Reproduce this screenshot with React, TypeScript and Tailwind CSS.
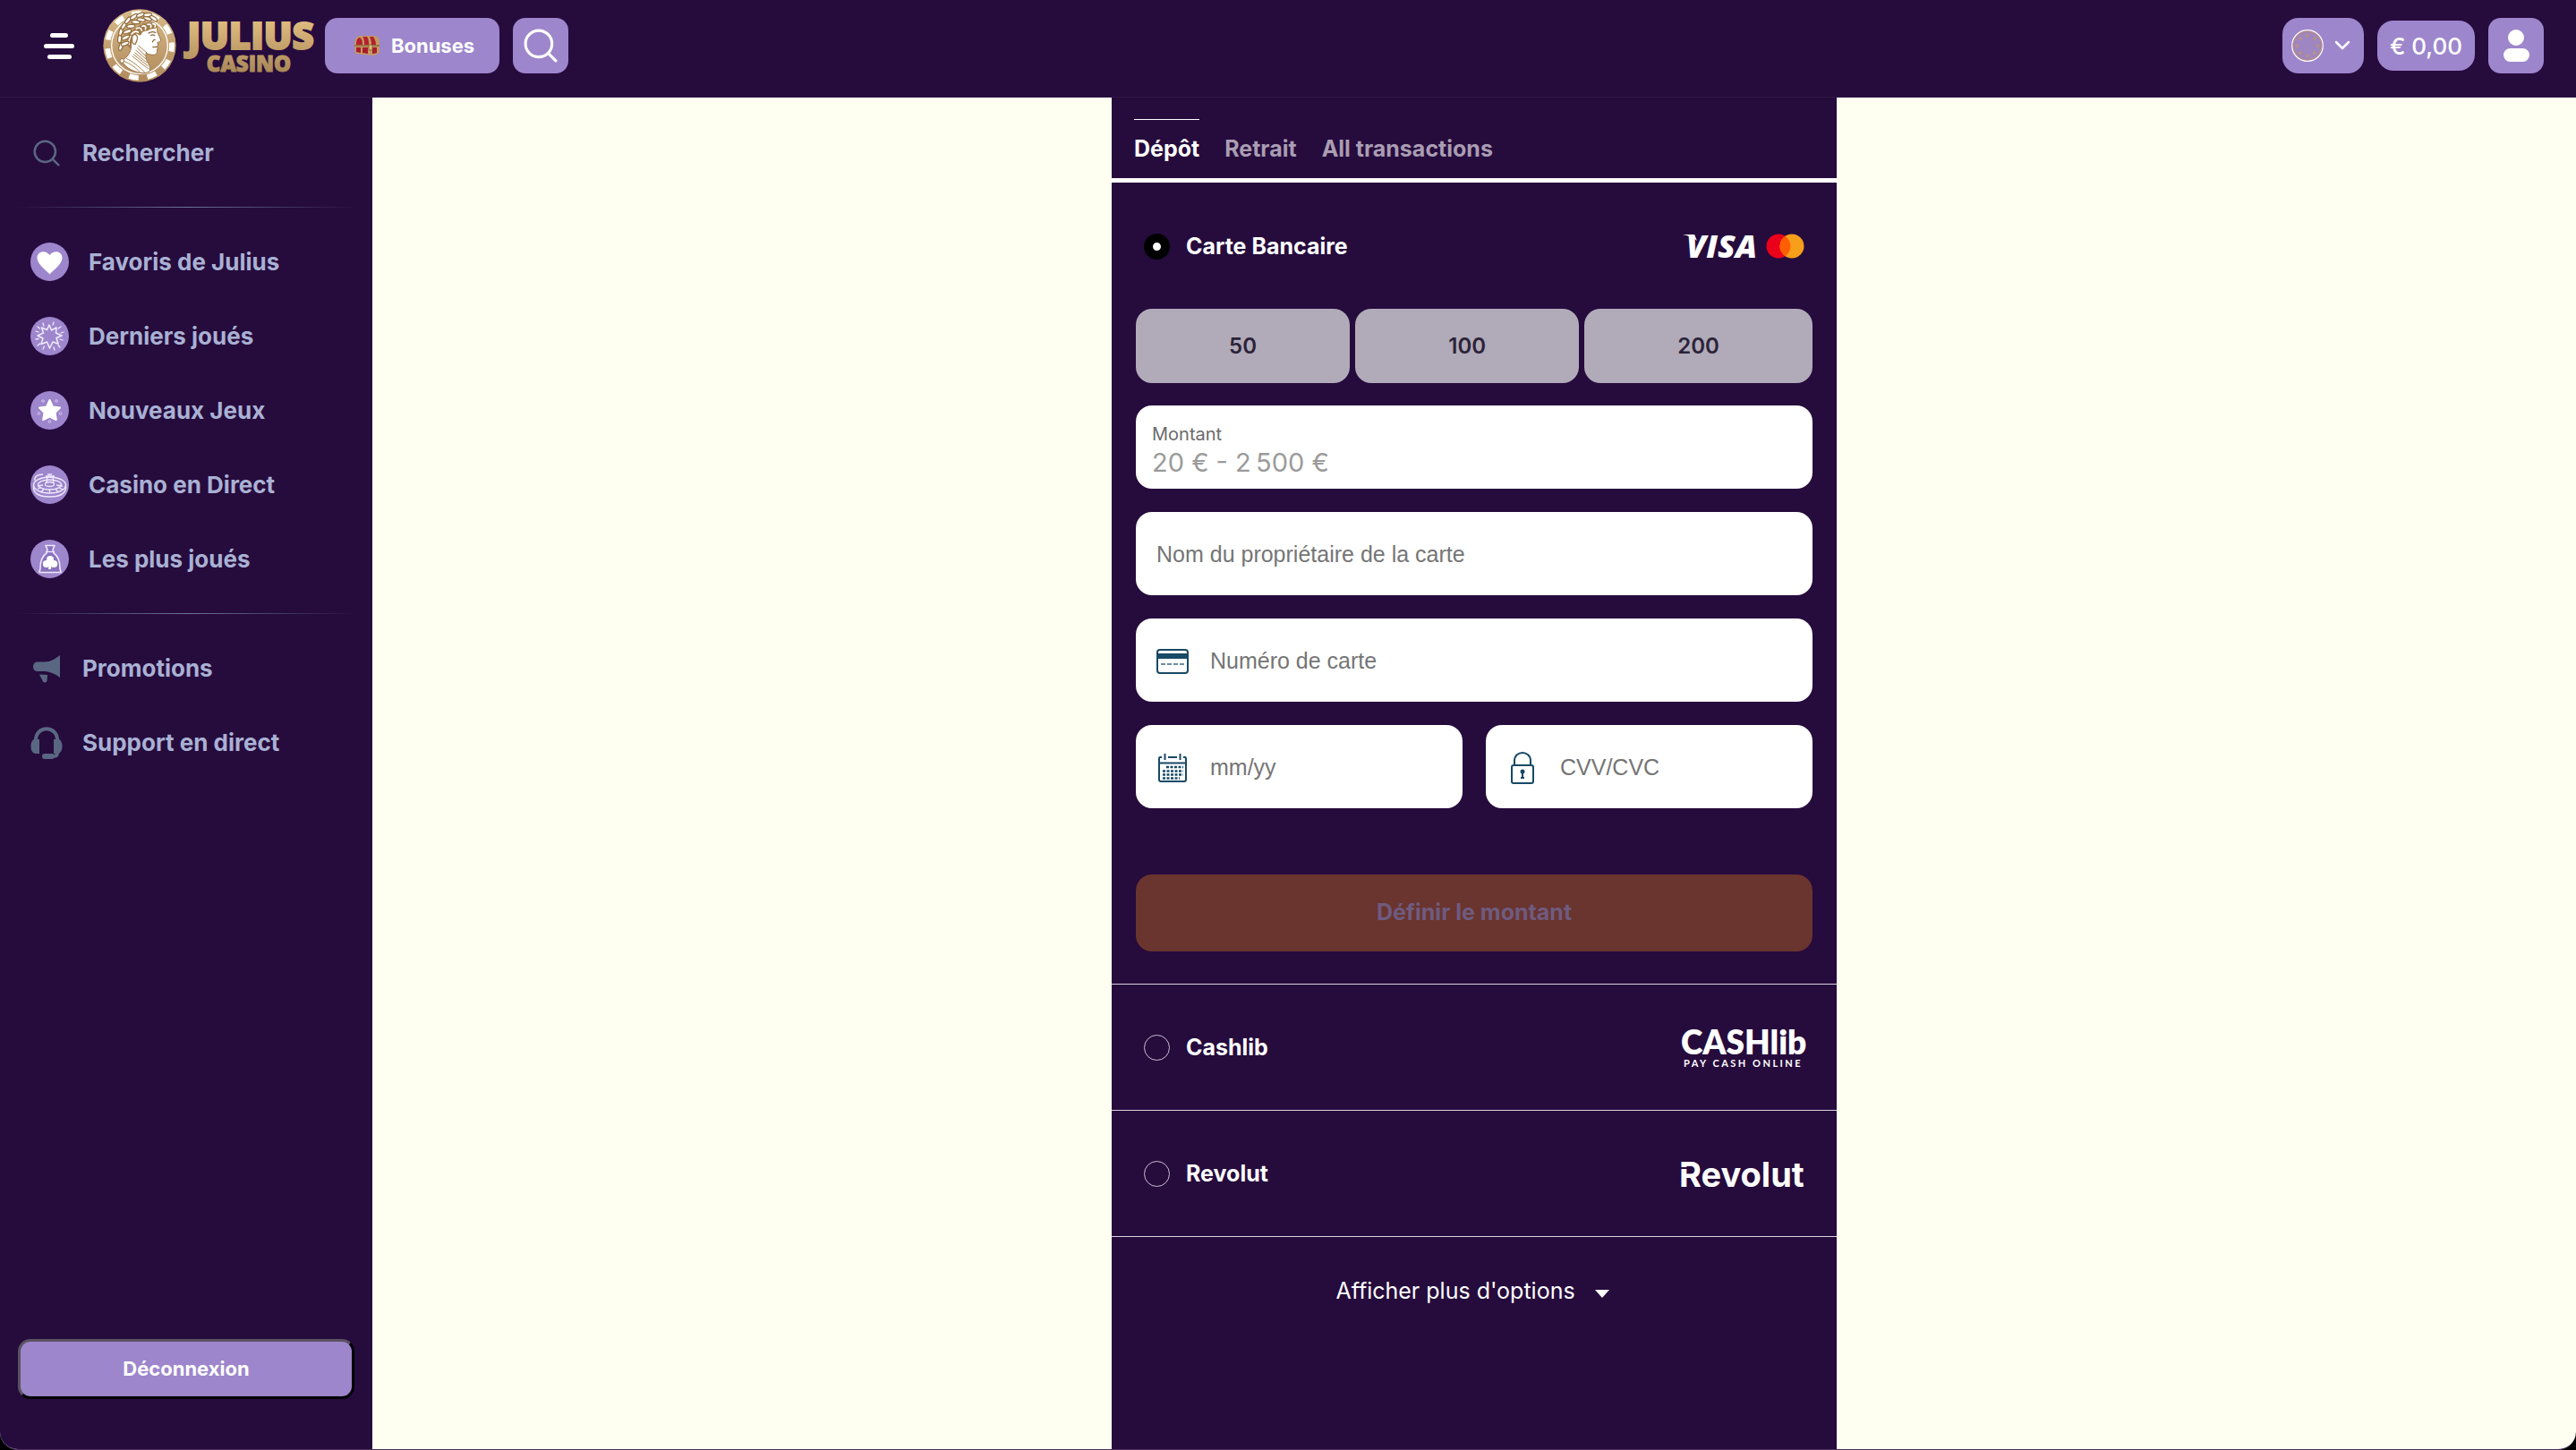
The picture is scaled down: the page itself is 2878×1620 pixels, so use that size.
import { ReactNode, useState } from 'react';

interface IconProps {
  className?: string;
}

interface PaymentMethod {
  id: string;
  label: string;
  logo: ReactNode;
}

function ChipLogo() {
  const leaves = [
    [60, 126, -75], [74, 116, -20], [56, 100, -85], [76, 96, -25], [60, 76, -75], [82, 76, -20],
    [70, 56, -60], [94, 58, -5], [84, 38, -50], [110, 44, 5], [104, 26, -35], [128, 36, 10],
    [126, 20, -20], [150, 32, 20], [150, 20, -5], [170, 32, 35],
  ];
  return (
    <svg viewBox="0 0 246 246" className="size-[82px]" aria-hidden="true">
      <defs>
        <linearGradient id="chipGold" x1="0" y1="0" x2="0" y2="1">
          <stop offset="0" stopColor="#d8b988" />
          <stop offset="1" stopColor="#b08a5c" />
        </linearGradient>
      </defs>
      <circle cx="123" cy="123" r="122" fill="url(#chipGold)" />
      <circle cx="123" cy="123" r="108" fill="none" stroke="#fff" strokeWidth="17" strokeDasharray="32 29.7" strokeDashoffset="12" />
      <circle cx="123" cy="123" r="94" fill="none" stroke="#fff" strokeWidth="4" />
      <path
        d="M168 44 C180 52 183 64 182 74 C184 84 193 98 194 106 C192 111 184 111 182 113 C186 119 186 122 181 126 C185 130 184 134 181 138 C183 148 178 154 168 154 C158 154 150 150 144 148 C142 164 148 178 156 190 C158 200 158 208 156 210 C136 218 120 214 104 208 C84 200 70 188 62 172 C78 166 90 152 94 132 L96 84 L130 50 Z"
        fill="#fff"
        stroke="#9a7446"
        strokeWidth="3"
      />
      {/* neck shadow */}
      <path
        d="M118 122 L148 148 M114 130 L143 158 M110 138 L144 168 M106 146 L147 180 M102 152 L152 192 M98 158 L154 202 M62 172 C84 180 104 190 124 212 M78 166 C100 176 116 190 140 212"
        fill="none"
        stroke="#a8834f"
        strokeWidth="3"
      />
      {/* curls under the laurel */}
      <path
        d="M94 132 C84 128 78 118 82 104 C80 90 88 76 102 70 C112 56 132 50 150 48 C164 44 182 50 182 60 C176 70 160 64 152 72 C142 76 136 72 130 82 C126 92 120 88 116 84 C104 80 94 92 98 106 Z"
        fill="#a07a48"
      />
      <path
        d="M88 118 C84 106 90 100 92 92 M96 84 C104 74 112 74 118 78 M112 66 C120 60 128 64 130 72 M132 58 C142 54 146 62 142 68 M150 52 C160 50 164 56 160 62 M168 50 C176 50 178 56 174 60"
        fill="none"
        stroke="#fff"
        strokeWidth="5"
        strokeLinecap="round"
      />
      <path d="M98 96 C98 86 108 82 114 90 C118 98 114 108 108 118 C100 120 96 108 98 96 Z" fill="#fff" stroke="#9a7446" strokeWidth="4" />
      <path d="M152 82 C160 76 170 76 178 80 M160 90 C164 86 170 86 174 90 M166 128 L181 127 M166 112 C168 104 172 102 176 104" fill="none" stroke="#8a6534" strokeWidth="4" />
      {leaves.map(([x, y, angle], idx) => (
        <ellipse
          key={idx}
          cx={x}
          cy={y}
          rx="14"
          ry="6"
          transform={`rotate(${angle} ${x} ${y})`}
          fill="#fff"
          stroke="#94703f"
          strokeWidth="4"
        />
      ))}
      <circle cx="64" cy="174" r="7" fill="#fff" stroke="#9a7446" strokeWidth="3" />
    </svg>
  );
}

function WordMark() {
  return (
    <svg viewBox="0 0 146 64" className="h-16 w-[146px] overflow-visible" role="img" aria-label="Julius Casino">
      <defs>
        <linearGradient id="wordGold" gradientUnits="userSpaceOnUse" x1="0" y1="0" x2="0" y2="64">
          <stop offset="0" stopColor="#e3bf82" />
          <stop offset="1" stopColor="#a88756" />
        </linearGradient>
      </defs>
      <g fill="url(#wordGold)" stroke="url(#wordGold)" textAnchor="middle" fontFamily="'Open Sans', sans-serif" fontWeight="800">
        <text x="75" y="36" fontSize="42" strokeWidth="2">JULIUS</text>
        <text x="73" y="61" fontSize="24" strokeWidth="1">CASINO</text>
      </g>
    </svg>
  );
}

function ChestIcon({ className }: IconProps) {
  return (
    <svg viewBox="0 0 30 24" className={className} aria-hidden="true">
      <path d="M1 12 C1 4 4 1 8 1 H23 C27 1 29 4 29 9 V20 L23 23 L2 21 Z" fill="#c39a62" />
      <path d="M3 11 C3 5 5 3 7 3 C10 5 10 8 10 11 Z M12 11 C12 7 12 4 10 2 H15 C17 5 17 8 17 11 Z M20 11 C20 7 19 4 18 2 H22 C24 5 25 8 25 11 Z" fill="#b3202f" />
      <path d="M3 14 H8 V20 L3 19 Z M10 14 H16 V21 L10 20 Z M21 14 H26 V20 L22 21 H21 Z" fill="#a81c2b" />
      <path d="M1 12 H29" stroke="#7a4f2a" strokeWidth="1" />
      <rect x="17" y="11" width="4" height="6" rx="1" fill="#e0bd7e" stroke="#7a4f2a" strokeWidth=".8" />
    </svg>
  );
}

function SearchIcon({ className }: IconProps) {
  return (
    <svg viewBox="0 0 36 36" className={className} fill="none" stroke="currentColor" strokeLinecap="round" aria-hidden="true">
      <circle cx="16" cy="16" r="14" />
      <path d="M26 26 L34 34" />
    </svg>
  );
}

function EuroFlag() {
  const angles = [0, 45, 90, 135, 180, 225, 270, 315];
  return (
    <svg viewBox="0 0 36 36" className="size-9" aria-hidden="true">
      <circle cx="18" cy="18" r="17.300" fill="#a589ae" stroke="#fff" strokeWidth="1.200" />
      <circle cx="18" cy="18" r="15.500" fill="#9d86c2" stroke="#b08a92" strokeWidth="1.500" />
      {angles.map((angle) => (
        <path
          key={angle}
          transform={`rotate(${angle} 18 18) translate(18 6.800) rotate(${-angle})`}
          d="M0 -2.800 L.8 -.9 L2.800 -.8 L1.200 .5 L1.700 2.500 L0 1.400 L-1.700 2.500 L-1.200 .5 L-2.800 -.8 L-.8 -.9 Z"
          fill="#bb9084"
        />
      ))}
    </svg>
  );
}

function UserIcon() {
  return (
    <svg viewBox="0 0 30 38" className="h-[38px] w-[30px]" fill="#fff" aria-hidden="true">
      <circle cx="15" cy="10" r="9" />
      <rect x="1" y="22" width="29" height="15" rx="7.500" />
    </svg>
  );
}

// Round purple badge behind each category glyph
function Badge({ children }: { children: ReactNode }) {
  return (
    <svg viewBox="0 0 43 43" className="size-[43px]" aria-hidden="true">
      <circle cx="21.500" cy="21.500" r="21.500" fill="#9d86cc" />
      {children}
    </svg>
  );
}

const heart = (
  <Badge>
    <path d="M21.500 35.500 C19 32 8 25 7.500 17.500 C7.500 9 17.500 8 21.500 14 C25.500 8 35.500 9 35.500 17.500 C35 25 24 32 21.500 35.500 Z" fill="#fff" />
  </Badge>
);

const burst = (
  <Badge>
    <g fill="none" stroke="#f1ebff" strokeWidth="1.500" strokeLinejoin="round" strokeLinecap="round">
      <path d="M21 9 L23.500 15 L29 12 L28.500 18 L35 21 L29 23.500 L31 30 L25 28 L21.500 35 L18.500 28 L12 30.500 L14 24 L8 21 L14.500 18 L12.500 12 L18.500 14.500 Z" />
      <path d="M14 7 L15 10 M26 6 L25 9 M34 11 L31 13 M37 17 L34 18 M36 26 L33 25 M33 34 L31 31.500 M27 37 L26 34 M14 36 L15.500 33 M8 32 L10.500 30 M6 25 L9 24.500 M6 16 L9 17 M8 11 L10.500 13" strokeWidth="1.300" />
    </g>
  </Badge>
);

const star = (
  <Badge>
    <path d="M21.500 10 L25 17.500 L33 18.500 L27.500 24 L28.800 32 L21.500 28.500 L14.200 32 L15.500 24 L10 18.500 L18 17.500 Z" fill="#fff" stroke="#fff" strokeWidth="2" strokeLinejoin="round" />
    <g fill="none" stroke="#d4c5f0" strokeWidth="1">
      <circle cx="14" cy="11" r="1.300" />
      <circle cx="29" cy="11" r="1.300" />
      <circle cx="9.500" cy="25" r="1.300" />
      <circle cx="33.500" cy="25" r="1.300" />
      <circle cx="21.500" cy="34" r="1.300" />
    </g>
  </Badge>
);

const roulette = (
  <Badge>
    <g fill="none" stroke="#efe8ff" strokeWidth="1.300">
      <ellipse cx="21.500" cy="22" rx="18" ry="9" />
      <path d="M3.500 22 V26 C5 33 14 35 21.500 35 C29 35 38 33 39.500 26 V22" />
      <ellipse cx="21.500" cy="21.500" rx="13" ry="5.500" />
      <path d="M18 20 L19 13 H25 L26 20 M17 12 H27 M19 10 H24 M5 17 C4 12 8 10 14 10 M8 23 L14 22 M29 22 L36 23 M15 26 L12 30 M28 26 L31 30 M21.500 27 V31 M8 26 L11 25 M32 25 L36 27" />
      <ellipse cx="21.500" cy="21" rx="5" ry="2.500" />
    </g>
  </Badge>
);

const pouch = (
  <Badge>
    <path d="M17 6.500 H27 L25 11 L26 15 C32 19 33 26 33 32 L34 36.500 H10 L11 32 C11 26 12 19 18 15 L19 11 Z" fill="#8a72be" stroke="#eee7ff" strokeWidth="1.600" strokeLinejoin="round" />
    <path d="M17 13.500 H27" stroke="#eee7ff" strokeWidth="1.300" />
    <g fill="#fff">
      <circle cx="22" cy="22" r="4" />
      <circle cx="17.800" cy="27" r="4" />
      <circle cx="26.200" cy="27" r="4" />
      <path d="M21 26 H23.500 L23 33 H20 Z" />
    </g>
  </Badge>
);

const categories = [
  { label: 'Favoris de Julius', icon: heart },
  { label: 'Derniers joués', icon: burst },
  { label: 'Nouveaux Jeux', icon: star },
  { label: 'Casino en Direct', icon: roulette },
  { label: 'Les plus joués', icon: pouch },
];

const megaphone = (
  <svg viewBox="0 0 32 32" className="ml-[2px] size-8" fill="#5a6782" aria-hidden="true">
    <path d="M31 1 V26 C26 22 20 19.500 14 19 H6 C2.500 19 1 16.500 1 14 C1 10.500 3 8.500 6 8.500 H14 C20 8.500 26 5 31 1 Z" />
    <path d="M8 22.500 L17 23 L16.500 30 C15 32 13 32 12 30.500 Z" />
  </svg>
);

const headset = (
  <svg viewBox="0 0 36 36" className="size-9" fill="#5a6782" aria-hidden="true">
    <path d="M6 15 C6 -2 30 -2 30 15" fill="none" stroke="#5a6782" strokeWidth="4" />
    <path d="M10 14 V30 H6 C-1 30 -1 16 4 14 Z M26 14 V30 H30 C37 30 37 16 32 14 Z" />
    <path d="M30 29 C30 33 28 33 23 33" fill="none" stroke="#5a6782" strokeWidth="4" />
    <rect x="13" y="30" width="14" height="6" rx="3" />
  </svg>
);

function Divider() {
  return <hr className="mx-4 my-[19px] h-px border-0 bg-linear-to-r from-transparent via-[#6a759a] to-transparent" />;
}

function NavLink({ label, icon, badge }: { label: string; icon: ReactNode; badge?: boolean }) {
  return (
    <a href="#" className={`flex h-[83px] items-center ${badge ? 'gap-[22px] pl-[34px]' : 'pl-[34px]'}`}>
      {badge ? icon : <span className="flex w-[58px] items-center">{icon}</span>}
      {label}
    </a>
  );
}

function Sidebar() {
  return (
    <aside className="flex w-[416px] shrink-0 flex-col bg-[#260b3d] pt-5 text-[26px] font-bold text-[#a9b1d3]">
      <nav>
        <NavLink label="Rechercher" icon={<SearchIcon className="ml-[3px] size-[30px] stroke-3 text-[#5a6782]" />} />
        <Divider />
        {categories.map((item) => (
          <NavLink key={item.label} label={item.label} icon={item.icon} badge />
        ))}
        <Divider />
        <NavLink label="Promotions" icon={megaphone} />
        <NavLink label="Support en direct" icon={headset} />
      </nav>
      <div className="mt-auto px-5 pb-14">
        <button className="h-[67px] w-full rounded-[14px] border-3 border-t-[#5a5261] border-r-black border-b-black border-l-[#5a5261] bg-[#9d86cc] text-[22px] text-white">
          Déconnexion
        </button>
      </div>
    </aside>
  );
}

function Header() {
  return (
    <header className="flex h-[109px] items-center border-b border-[#2f1745] bg-[#260b3d] pr-9 pb-[6px] pl-12 text-white">
      <button className="flex w-9 flex-col items-center gap-[7px]" aria-label="Menu">
        <span className="h-[5px] w-5 rounded-full bg-white" />
        <span className="h-[5px] w-[34px] rounded-full bg-white" />
        <span className="h-[5px] w-[27px] rounded-full bg-white" />
      </button>
      <a href="#" className="ml-[31px] flex items-center gap-2">
        <ChipLogo />
        <WordMark />
      </a>
      <button className="ml-3 flex h-[62px] w-[195px] items-center justify-center gap-3 rounded-[14px] bg-[#9d86cc] pl-1 text-[22px] font-bold">
        <ChestIcon className="h-6 w-[30px]" />
        Bonuses
      </button>
      <button className="ml-[15px] flex size-[62px] items-center justify-center rounded-[14px] bg-[#9d86cc]" aria-label="Rechercher">
        <SearchIcon className="size-[38px] stroke-3" />
      </button>
      <div className="ml-auto flex items-center gap-[15px]">
        <button className="flex h-[62px] w-[91px] items-center gap-3 rounded-[18px] bg-[#9d86cc] pl-[10px]" aria-label="Devise">
          <EuroFlag />
          <svg viewBox="0 0 18 12" className="h-3 w-[18px]" fill="none" stroke="#fff" strokeWidth="2.500" strokeLinecap="round" strokeLinejoin="round" aria-hidden="true">
            <path d="M2 2 L9 9 L16 2" />
          </svg>
        </button>
        <button className="flex h-14 w-[109px] items-center justify-center rounded-[18px] bg-[#9d86cc] text-[26px] font-medium">€ 0,00</button>
        <button className="flex size-[62px] items-center justify-center rounded-[14px] bg-[#9d86cc]" aria-label="Profil">
          <UserIcon />
        </button>
      </div>
    </header>
  );
}

const cardLogos = (
  <svg viewBox="0 0 136 30" className="h-[30px] w-[136px] overflow-visible" role="img" aria-label="Visa, Mastercard">
    <path d="M0 2 H13 L16 9 C11 5 6 3 0 2 Z" fill="#fff" />
    <text x="4" y="28" fontFamily="'Open Sans', sans-serif" fontSize="36" fontWeight="800" fontStyle="italic" fill="#fff">VISA</text>
    <circle cx="107" cy="15" r="13.500" fill="#eb001b" />
    <circle cx="122" cy="15" r="13.500" fill="#f79e1b" />
    <path d="M114.500 3.800 A13.500 13.500 0 0 1 114.500 26.200 A13.500 13.500 0 0 1 114.500 3.800 Z" fill="#ff5f00" />
  </svg>
);

const cashlibLogo = (
  <svg viewBox="0 0 138 46" className="h-[46px] w-[138px] overflow-visible" role="img" aria-label="CASHlib" fill="#fff" fontFamily="Lato, sans-serif">
    <text x="0" y="31" fontSize="37" fontWeight="800">CASHlib</text>
    <text x="3" y="45" fontSize="11" fontWeight="700" letterSpacing="2.500">PAY CASH ONLINE</text>
  </svg>
);

const revolutLogo = (
  <svg viewBox="0 0 138 34" className="h-[34px] w-[138px] overflow-visible" role="img" aria-label="Revolut">
    <text x="-2" y="32" fontFamily="Inter, sans-serif" fontSize="38" fontWeight="700" fill="#fff">Revolut</text>
    <path d="M0 11 H7" stroke="#260b3d" strokeWidth="2" />
  </svg>
);

const methods: PaymentMethod[] = [
  { id: 'card', label: 'Carte Bancaire', logo: cardLogos },
  { id: 'cashlib', label: 'Cashlib', logo: cashlibLogo },
  { id: 'revolut', label: 'Revolut', logo: revolutLogo },
];

function CardIcon() {
  return (
    <svg viewBox="0 0 36 28" className="h-7 w-9 shrink-0" fill="none" stroke="#174a66" strokeWidth="2" aria-hidden="true">
      <rect x="1" y="1" width="34" height="26" rx="3" />
      <path d="M1 8 H35" strokeWidth="6" />
      <path d="M5 17 H32" strokeDasharray="5 2" stroke="#6d8da0" />
    </svg>
  );
}

function CalendarIcon() {
  return (
    <svg viewBox="0 0 32 32" className="mx-[2px] size-8 shrink-0" fill="none" stroke="#174a66" strokeWidth="2" aria-hidden="true">
      <path d="M4 4 H2 C1 4 1 5 1 6 V29 C1 30 2 31 3 31 H29 C30 31 31 30 31 29 V6 C31 5 31 4 30 4 H28 M11 4 H21 M7.500 0 V7 M24.500 0 V7 M1 10.500 H31" />
      <path d="M9 15 H28 M5 19.500 H28 M5 23.500 H28 M5 27.500 H24" strokeDasharray="3 1.500" strokeWidth="2.500" />
    </svg>
  );
}

function LockIcon() {
  return (
    <svg viewBox="0 0 26 36" className="mx-[5px] h-9 w-[26px] shrink-0" fill="none" stroke="#174a66" strokeWidth="2" aria-hidden="true">
      <rect x="1" y="15" width="24" height="20" rx="2" />
      <path d="M4 15 V10 C4 -2 22 -2 22 10 V15" />
      <circle cx="13" cy="22" r="2.500" fill="#174a66" stroke="none" />
      <path d="M13 22 V29 M11 29 H15" />
    </svg>
  );
}

function Field({ label, icon, placeholder }: { label: string; icon?: ReactNode; placeholder: string }) {
  return (
    <label className="flex h-[93px] min-w-0 flex-1 items-center gap-6 rounded-[18px] bg-white pt-[2px] pr-6 pl-[23px]">
      {icon}
      <input
        type="text"
        aria-label={label}
        placeholder={placeholder}
        className="w-full min-w-0 bg-transparent font-['Liberation_Sans',sans-serif] text-[25px] text-gray-800 outline-none placeholder:text-[#757575]"
      />
    </label>
  );
}

function CardForm() {
  const [amount, setAmount] = useState('');

  return (
    <form className="px-[27px] pb-9" onSubmit={(e) => e.preventDefault()}>
      <div className="flex gap-[6px]">
        {['50', '100', '200'].map((value) => (
          <button
            key={value}
            type="button"
            onClick={() => setAmount(value)}
            className="h-[83px] flex-auto rounded-[18px] bg-[#b1abb9] text-2xl font-semibold text-[#2c2339]"
          >
            {value}
          </button>
        ))}
      </div>
      <div className="mt-[25px] flex flex-col gap-[26px]">
        <div className="flex h-[93px] flex-col justify-center rounded-[18px] bg-white px-[18px] pt-[6px]">
          <label htmlFor="amount" className="text-xl leading-7 text-[#6b6b6b]">Montant</label>
          <input
            id="amount"
            type="text"
            value={amount}
            onChange={(e) => setAmount(e.target.value)}
            placeholder={'20 € - 2\u202f500 €'}
            className="text-[29px] leading-9 text-gray-800 outline-none placeholder:text-[#9b9b9b]"
          />
        </div>
        <div className="flex">
          <Field label="Nom du propriétaire de la carte" placeholder="Nom du propriétaire de la carte" />
        </div>
        <div className="flex">
          <Field label="Numéro de carte" icon={<CardIcon />} placeholder="Numéro de carte" />
        </div>
        <div className="flex gap-[26px]">
          <Field label="Date d'expiration" icon={<CalendarIcon />} placeholder="mm/yy" />
          <Field label="CVV/CVC" icon={<LockIcon />} placeholder="CVV/CVC" />
        </div>
      </div>
      <button type="submit" className="mt-[74px] h-[86px] w-full rounded-[18px] bg-[#6a342f] text-[25px] font-bold text-[#6f5b7f]">
        Définir le montant
      </button>
    </form>
  );
}

function DepositPanel() {
  const [selected, setSelected] = useState('card');

  return (
    <section className="w-full max-w-[810px] bg-[#260b3d] text-[25px] text-white">
      <div className="flex gap-7 border-b-5 border-white px-[25px] pt-6 pb-[19px] font-bold text-[#a99db2]">
        <button className="border-t border-white pt-[18px] leading-7 text-white">Dépôt</button>
        <button className="border-t border-transparent pt-[18px] leading-7">Retrait</button>
        <button className="border-t border-transparent pt-[18px] leading-7">All transactions</button>
      </div>
      {methods.map((method, idx) => (
        <div key={method.id} className={idx > 0 ? 'border-t border-[#d9d3de]' : 'border-t border-transparent'}>
          <label className="flex h-[140px] items-center pr-9 pl-9 font-bold">
            <input
              type="radio"
              name="method"
              checked={selected === method.id}
              onChange={() => setSelected(method.id)}
              className="mr-[18px] size-[29px] appearance-none rounded-full border border-[#c9c0d0] checked:border-10 checked:border-black checked:bg-white"
            />
            <span className="pt-[2px]">{method.label}</span>
            <span className="ml-auto">{method.logo}</span>
          </label>
          {method.id === 'card' && selected === 'card' && <CardForm />}
        </div>
      ))}
      <div className="flex justify-center border-t border-[#d9d3de] pt-11">
        <button className="flex items-center gap-[22px] pr-1 leading-8">
          Afficher plus d'options
          <svg viewBox="0 0 16 16" className="size-4" fill="#fff" aria-hidden="true">
            <path d="M0 7 H16 L8 16 Z" />
          </svg>
        </button>
      </div>
    </section>
  );
}

export default function App() {
  return (
    <div className="bg-black">
      <div className="flex min-h-screen flex-col overflow-hidden rounded-b-[20px] border-b border-[#4b3060] bg-[#fffff1] font-[Inter,sans-serif]">
        <Header />
        <div className="flex flex-1">
          <Sidebar />
          <main className="flex flex-1 justify-center">
            <DepositPanel />
          </main>
        </div>
      </div>
    </div>
  );
}
